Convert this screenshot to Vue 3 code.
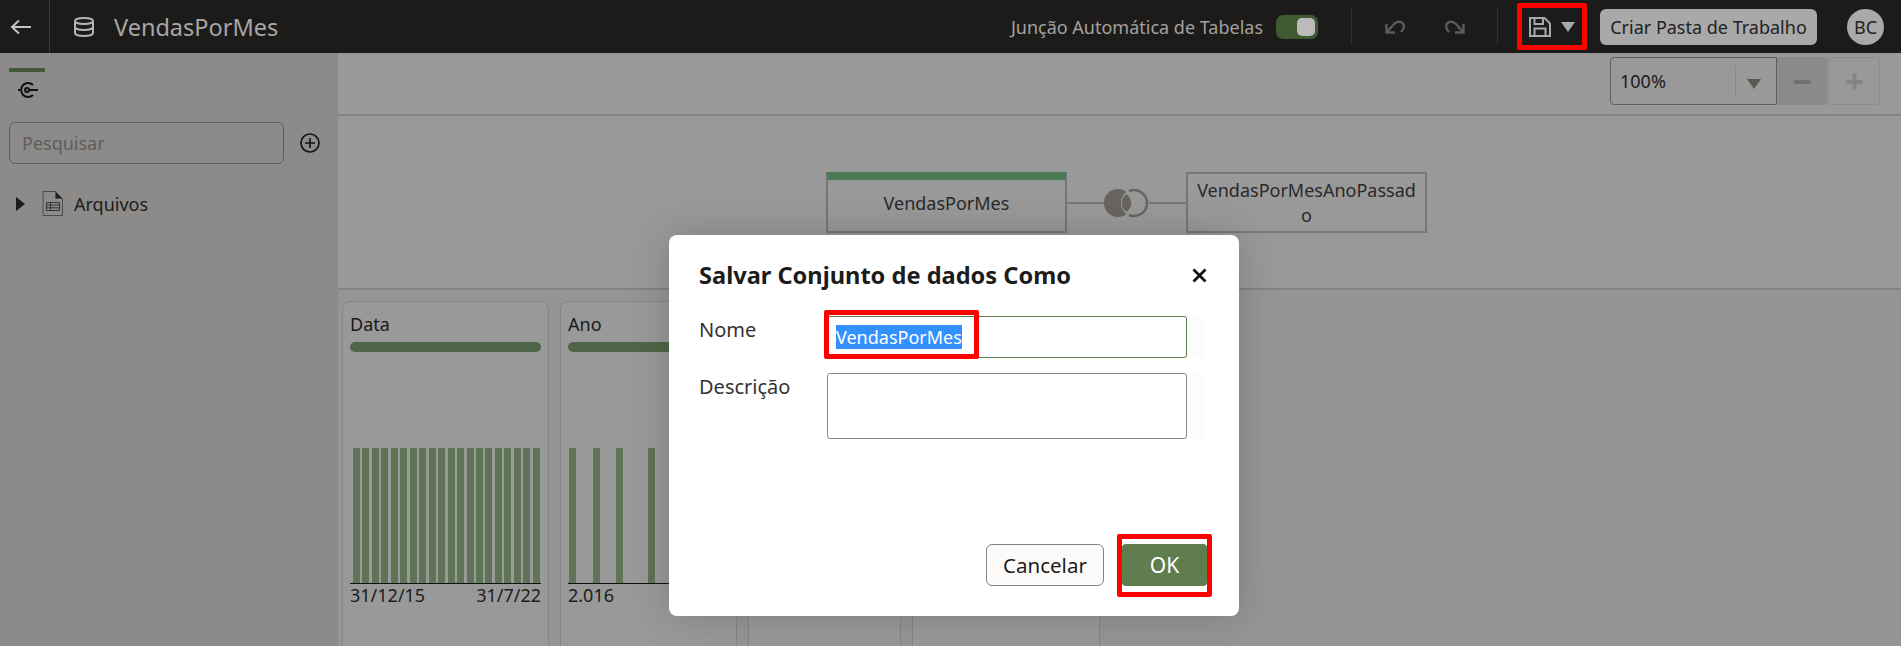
<template>
  <div class="page">
    <!-- barra superior -->
    <header class="topbar">
      <button class="back">
        <svg width="22" height="16" viewBox="0 0 22 16" fill="none" stroke="#c4c4c2" stroke-width="2">
          <path d="M21 8H2M9 1.500 2 8l7 6.500" />
        </svg>
      </button>
      <svg class="db" width="22" height="20" viewBox="0 0 22 20" fill="none" stroke="#b5b3b1" stroke-width="2">
        <ellipse cx="11" cy="4" rx="9" ry="3" />
        <path d="M2 4v12c0 1.700 4 3 9 3s9-1.300 9-3V4M2 10c0 1.700 4 3 9 3s9-1.300 9-3" />
      </svg>
      <span class="title">VendasPorMes</span>

      <span class="auto-label">Junção Automática de Tabelas</span>
      <span class="toggle"><i></i></span>
      <span class="vsep sep-a"></span>
      <svg class="undo" width="20" height="14" viewBox="0 0 20 14" fill="none" stroke="#5c5b59" stroke-width="2.400">
        <path d="M1.500 4v8.500H10M2.500 11.500 9 4c3-3 7-3 9-.5 1.500 2.500.5 6-2 8.500" />
      </svg>
      <svg class="redo" width="20" height="14" viewBox="0 0 20 14" fill="none" stroke="#5c5b59" stroke-width="2.400">
        <path d="M18.500 4v8.500H10M17.500 11.500 11 4C8 1 4 1 2 3.500.5 6 1.500 9.500 4 12" />
      </svg>
      <span class="vsep sep-b"></span>
      <div class="save-box">
        <svg width="22" height="20" viewBox="0 0 22 20" fill="none" stroke="#a9a9a9" stroke-width="2">
          <path d="M1 1h14.500L21 6.500V19H1zM5.500 1v6h8.500V1M5.500 19v-7.500h11V19" />
        </svg>
        <span class="save-caret"></span>
      </div>
      <button class="create">Criar Pasta de Trabalho</button>
      <span class="avatar">BC</span>
    </header>

    <div class="body">
      <aside class="sidebar">
        <div class="tab">
          <span class="tab-bar"></span>
          <svg width="22" height="18" viewBox="0 0 22 18" fill="none" stroke="#111" stroke-width="2">
            <path d="M16 4A7 7 0 1 0 16 14" />
            <circle cx="10" cy="9" r="2" />
            <path d="M12 9h9M1 9h2" />
          </svg>
        </div>
        <div class="search-row">
          <input class="search" placeholder="Pesquisar" />
          <svg width="20" height="20" viewBox="0 0 20 20" fill="none" stroke="#111" stroke-width="1.600">
            <circle cx="10" cy="10" r="9" />
            <path d="M10 5v10M5 10h10" />
          </svg>
        </div>
        <div class="tree-row">
          <span class="tree-caret"></span>
          <svg class="file" width="21" height="25" viewBox="0 0 21 25" fill="none" stroke="#4c4c4a" stroke-width="1">
            <path d="M1 .5h12.500l7 7V24.500H1z" />
            <path d="M13.500 .5l7 7h-7z" fill="#222" />
            <path d="M4.500 11.500h13v8h-13zM4.500 14h13M4.500 16.800h13M8.500 11.500v8" stroke="#333" />
          </svg>
          <span>Arquivos</span>
        </div>
      </aside>

      <main class="content">
        <div class="zoombar">
          <div class="zoom-select">
            <span class="zoom-value">100%</span>
            <span class="zoom-arrow"><i></i></span>
          </div>
          <button class="zoom-btn minus">−</button>
          <button class="zoom-btn plus">+</button>
        </div>

        <section class="canvas">
          <div class="node first">VendasPorMes</div>
          <span class="link"></span>
          <svg class="join" width="45" height="30" viewBox="0 0 45 30">
            <!-- circulo esquerdo cheio, direito so contorno, intersecao cheia -->
            <circle cx="14" cy="15" r="14" fill="#686460" />
            <circle cx="31" cy="15" r="14" fill="#999" />
            <path d="M22.500 6a11 11 0 0 0 0 18 11 11 0 0 0 0-18z" fill="#686460" />
            <path d="M25 3a13 13 0 1 1 0 24" fill="none" stroke="#686460" stroke-width="2.500" />
          </svg>
          <span class="link"></span>
          <div class="node">VendasPorMesAnoPassado</div>
        </section>

        <section class="columns">
          <article v-for="col in columns" :key="col.id" class="col" :style="{ width: col.width + 'px' }">
            <template v-if="col.name">
              <h3>{{ col.name }}</h3>
              <div class="quality"></div>
              <div class="chart">
                <span
                  v-for="(x, i) in col.bars"
                  :key="i"
                  class="bar"
                  :style="{ left: x + 'px' }"
                ></span>
              </div>
              <div class="axis">
                <span>{{ col.from }}</span>
                <span>{{ col.to }}</span>
              </div>
            </template>
          </article>
        </section>
      </main>
    </div>

    <!-- dialogo -->
    <div class="dialog">
      <div class="dlg-head">
        <h2>Salvar Conjunto de dados Como</h2>
        <svg width="15" height="15" viewBox="0 0 15 15" stroke="#111" stroke-width="2.800">
          <path d="M1.500 1.500l12 12M13.500 1.500l-12 12" />
        </svg>
      </div>
      <div class="field">
        <label>Nome</label>
        <div class="input name">
          <span class="selected">VendasPorMes</span>
          <span class="mark mark-name"></span>
        </div>
      </div>
      <div class="field">
        <label>Descrição</label>
        <div class="input desc"></div>
      </div>
      <div class="dlg-foot">
        <button class="cancel">Cancelar</button>
        <button class="ok">OK<span class="mark mark-ok"></span></button>
      </div>
    </div>
  </div>
</template>

<script setup>
// posicoes das barras dos histogramas
const dataBars = Array.from({ length: 20 }, (_, i) => i * 9.46)

const columns = [
  { id: 'data', name: 'Data', width: 207, bars: dataBars, from: '31/12/15', to: '31/7/22' },
  { id: 'ano', name: 'Ano', width: 177, bars: [-2, 22, 45, 77], from: '2.016', to: '' },
  { id: 'c3', name: '', width: 153 },
  { id: 'c4', name: '', width: 188 },
]
</script>

<style>
html, body { background: #999; overflow: hidden; }
</style>

<style scoped>
.page { position: relative; width: 1901px; height: 646px; overflow: hidden;
  font-family: "Noto Sans", "Open Sans", sans-serif; font-size: 18px; color: #1c1c1c; }
button { font-family: inherit; font-size: 18px; padding: 0; }

/* Topo */
.topbar { height: 53px; background: #1c1b19; display: flex; align-items: center; padding-right: 17px; }
.back { width: 50px; height: 53px; background: none; border: 0; border-right: 1px solid #3d3c3a;
  display: flex; align-items: center; padding-left: 10px; flex: none; }
.db { margin-left: 23px; flex: none; }
.title { margin-left: 19px; font-size: 23.5px; color: #a7a6a4; }
.auto-label { margin-left: auto; white-space: nowrap; color: #a3a19e; }
.toggle { margin-left: 13px; width: 42px; height: 24px; border-radius: 7px; background: #3f5a33; display: flex;
  justify-content: flex-end; align-items: center; padding-right: 3px; box-sizing: border-box; }
.toggle i { width: 18px; height: 18px; border-radius: 5px; background: #bbb; }
.vsep { width: 1px; height: 36px; background: #33322f; }
.sep-a { margin-left: 33px; }
.undo { margin-left: 33px; }
.redo { margin-left: 40px; }
.sep-b { margin-left: 32px; }
.save-box { margin-left: 19px; width: 70px; height: 47px; box-sizing: border-box; border: 5px solid #f00;
  border-radius: 2px; display: flex; align-items: center; padding-left: 7px; gap: 10px; }
.save-caret { width: 0; height: 0; border-left: 7px solid transparent; border-right: 7px solid transparent;
  border-top: 10px solid #a9a9a9; }
.create { margin-left: 13px; width: 217px; height: 36px; border: 0; border-radius: 6px;
  background: #a9a9a9; color: #222; white-space: nowrap; }
.avatar { margin-left: 30px; width: 37px; height: 36px; border-radius: 50%; background: #a9a9a9;
  color: #222; display: flex; align-items: center; justify-content: center; }

.body { display: flex; height: 593px; }

/* Lateral */
.sidebar { width: 338px; background: #8c8b89; flex: none; padding-left: 9px; box-sizing: border-box; }
.tab { width: 36px; padding-top: 15px; display: flex; flex-direction: column; align-items: flex-start; }
.tab-bar { width: 36px; height: 4px; background: #44583a; }
.tab svg { margin: 9px 0 0 8px; }
.search-row { display: flex; align-items: center; gap: 16px; margin-top: 23px; }
.search { width: 275px; height: 42px; box-sizing: border-box; border: 1px solid #5e5e5c; border-radius: 6px;
  background: transparent; padding: 0 12px; font: inherit; outline: none; }
.search::placeholder { color: #5f5e5c; opacity: 1; }
.tree-row { display: flex; align-items: center; margin-top: 27px; height: 25px; padding-left: 7px; }
.tree-caret { width: 0; height: 0; border-top: 7px solid transparent; border-bottom: 7px solid transparent;
  border-left: 9px solid #1a1a1a; }
.file { margin: 0 11px 0 17px; }

/* Conteudo */
.content { flex: 1; min-width: 0; display: flex; flex-direction: column; background: #999; }
.zoombar { flex: none; height: 63px; box-sizing: border-box; border-bottom: 2px solid #848484; padding: 4px 21px 0 0;
  display: flex; justify-content: flex-end; align-items: flex-start; }
.zoom-select { width: 167px; height: 48px; box-sizing: border-box; border: 1px solid #5e5e5c; border-radius: 4px 0 0 4px;
  display: flex; align-items: center; justify-content: space-between; padding: 0 0 0 9px; }
.zoom-arrow { width: 41px; height: 32px; box-sizing: border-box; border-left: 1px solid #8a8a8a; display: flex;
  align-items: center; justify-content: center; padding: 6px 4px 0 0; }
.zoom-arrow i { border-left: 7px solid transparent; border-right: 7px solid transparent;
  border-top: 10px solid #5c5753; }
.zoom-btn { width: 51px; height: 48px; border: 1px solid #8d8d8d; background: #8b8b8b; border-radius: 0 3px 3px 0;
  font-size: 34px; font-weight: 700; line-height: 40px; color: #6f6f6f; }
.zoom-btn.plus { background: transparent; color: #858585; margin-left: 1px; border-radius: 3px; }

.canvas { flex: none; height: 174px; box-sizing: border-box; border-bottom: 2px solid #828282; display: flex;
  align-items: flex-start; padding: 56px 0 0 488px; }
.node { width: 241px; height: 61px; box-sizing: border-box; border: 2px solid #777; color: #2a2a2a;
  display: flex; align-items: center; justify-content: center; text-align: center; line-height: 25px;
  word-break: break-all; padding: 0 8px; }
.node.first { border-top: 8px solid #4a7a56; padding-bottom: 4px; }
.link { width: 37px; height: 2px; background: #777; margin-top: 30px; }
.join { margin-top: 16px; }

.columns { flex: 1; min-height: 0; overflow: hidden; display: flex; padding: 11px 0 0 4px; background: #959595; }
.col { flex: none; height: 360px; box-sizing: border-box; border: 1px solid #858585; border-radius: 8px; background: #999;
  padding: 10px 7px 0 7px; margin-right: 11px; }
.col h3 { margin: 0; font-size: 18px; font-weight: 400; line-height: 24px; color: #1a1a1a; }
.quality { height: 10px; margin-top: 6px; background: #4f6547; border-radius: 5px; }
.chart { position: relative; height: 135px; margin-top: 96px; border-bottom: 1px solid #111; }
.bar { position: absolute; top: 0; bottom: 0; width: 7px; margin-left: 3px; background: #5f7357; }
.axis { display: flex; justify-content: space-between; line-height: 24px; margin-top: -1px; color: #1c1c1c; }

/* Dialogo */
.dialog { position: absolute; left: 669px; top: 235px; width: 570px; height: 381px; box-sizing: border-box;
  background: #fff; border-radius: 8px; box-shadow: 0 0 40px rgba(0, 0, 0, .18);
  padding: 25px 30px 0; display: flex; flex-direction: column; }
.dlg-head { display: flex; justify-content: space-between; align-items: center; padding-right: 2px; height: 30px; }
.dlg-head h2 { margin: 0; font-size: 23.600px; font-weight: 700; color: #1c1c1c; white-space: nowrap; }
.field { display: flex; margin-top: 26px; }
.field + .field { margin-top: 15px; }
.field label { width: 128px; color: #333; font-size: 20px; line-height: 28px; flex: none; }
.input { position: relative; width: 360px; box-sizing: border-box; border: 1px solid #888; border-radius: 3px;
  box-shadow: 18px 0 0 #fcfcfc; }
.input.name { height: 42px; border-color: #5f7d4f; padding: 8px 8px; }
.input.desc { height: 66px; }
.selected { display: inline-block; background: #3390ff; color: #fff; height: 24px; line-height: 24px; }
.mark { position: absolute; box-sizing: border-box; border: 5px solid #f00; border-radius: 2px; }
.mark-name { left: -4px; top: -7px; width: 155px; height: 49px; }
.dlg-foot { margin-top: auto; margin-bottom: 30px; display: flex; justify-content: flex-end; gap: 18px; padding-right: 2px; }
.cancel { width: 118px; height: 42px; border: 1px solid #8a8580; border-radius: 6px; background: #fcfbfa; color: #1c1c1c; font-size: 20.500px; }
.ok { position: relative; width: 85px; height: 42px; border: 0; border-radius: 4px; background: #5f7d4f; color: #fff; font-size: 21px; }
.mark-ok { left: -5px; top: -10px; width: 95px; height: 63px; }
</style>
